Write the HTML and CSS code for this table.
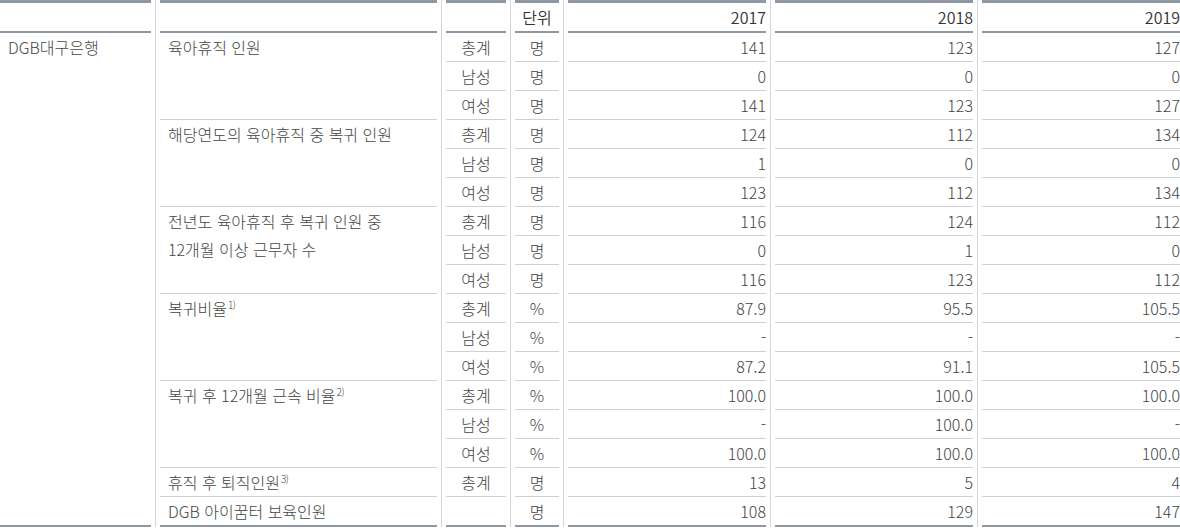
FILE: index.html
```html
<!DOCTYPE html>
<html lang="ko">
<head>
<meta charset="utf-8">
<title>육아휴직 현황</title>
<link rel="stylesheet" href="styles.css">
</head>
<body>
<div class="table">
  <!-- header -->
  <div class="c c1 hd"><div class="in"></div></div>
  <div class="c c2 hd"><div class="in"></div></div>
  <div class="c c3 hd"><div class="in"></div></div>
  <div class="c c4 hd"><div class="in">단위</div></div>
  <div class="c c5 hd"><div class="in">2017</div></div>
  <div class="c c6 hd"><div class="in">2018</div></div>
  <div class="c c7 hd"><div class="in">2019</div></div>

  <div class="c c1 span17"><div class="in last">DGB대구은행</div></div>

  <div class="c c2 span3"><div class="in">육아휴직 인원</div></div>
  <div class="c c3"><div class="in">총계</div></div><div class="c c4"><div class="in">명</div></div>
  <div class="c c5"><div class="in">141</div></div><div class="c c6"><div class="in">123</div></div><div class="c c7"><div class="in">127</div></div>
  <div class="c c3"><div class="in">남성</div></div><div class="c c4"><div class="in">명</div></div>
  <div class="c c5"><div class="in">0</div></div><div class="c c6"><div class="in">0</div></div><div class="c c7"><div class="in">0</div></div>
  <div class="c c3"><div class="in">여성</div></div><div class="c c4"><div class="in">명</div></div>
  <div class="c c5"><div class="in">141</div></div><div class="c c6"><div class="in">123</div></div><div class="c c7"><div class="in">127</div></div>

  <div class="c c2 span3"><div class="in">해당연도의 육아휴직 중 복귀 인원</div></div>
  <div class="c c3"><div class="in">총계</div></div><div class="c c4"><div class="in">명</div></div>
  <div class="c c5"><div class="in">124</div></div><div class="c c6"><div class="in">112</div></div><div class="c c7"><div class="in">134</div></div>
  <div class="c c3"><div class="in">남성</div></div><div class="c c4"><div class="in">명</div></div>
  <div class="c c5"><div class="in">1</div></div><div class="c c6"><div class="in">0</div></div><div class="c c7"><div class="in">0</div></div>
  <div class="c c3"><div class="in">여성</div></div><div class="c c4"><div class="in">명</div></div>
  <div class="c c5"><div class="in">123</div></div><div class="c c6"><div class="in">112</div></div><div class="c c7"><div class="in">134</div></div>

  <div class="c c2 span3"><div class="in">전년도 육아휴직 후 복귀 인원 중<br>12개월 이상 근무자 수</div></div>
  <div class="c c3"><div class="in">총계</div></div><div class="c c4"><div class="in">명</div></div>
  <div class="c c5"><div class="in">116</div></div><div class="c c6"><div class="in">124</div></div><div class="c c7"><div class="in">112</div></div>
  <div class="c c3"><div class="in">남성</div></div><div class="c c4"><div class="in">명</div></div>
  <div class="c c5"><div class="in">0</div></div><div class="c c6"><div class="in">1</div></div><div class="c c7"><div class="in">0</div></div>
  <div class="c c3"><div class="in">여성</div></div><div class="c c4"><div class="in">명</div></div>
  <div class="c c5"><div class="in">116</div></div><div class="c c6"><div class="in">123</div></div><div class="c c7"><div class="in">112</div></div>

  <div class="c c2 span3"><div class="in">복귀비율<sup>1)</sup></div></div>
  <div class="c c3"><div class="in">총계</div></div><div class="c c4"><div class="in">%</div></div>
  <div class="c c5"><div class="in">87.9</div></div><div class="c c6"><div class="in">95.5</div></div><div class="c c7"><div class="in">105.5</div></div>
  <div class="c c3"><div class="in">남성</div></div><div class="c c4"><div class="in">%</div></div>
  <div class="c c5"><div class="in">-</div></div><div class="c c6"><div class="in">-</div></div><div class="c c7"><div class="in">-</div></div>
  <div class="c c3"><div class="in">여성</div></div><div class="c c4"><div class="in">%</div></div>
  <div class="c c5"><div class="in">87.2</div></div><div class="c c6"><div class="in">91.1</div></div><div class="c c7"><div class="in">105.5</div></div>

  <div class="c c2 span3"><div class="in">복귀 후 12개월 근속 비율<sup>2)</sup></div></div>
  <div class="c c3"><div class="in">총계</div></div><div class="c c4"><div class="in">%</div></div>
  <div class="c c5"><div class="in">100.0</div></div><div class="c c6"><div class="in">100.0</div></div><div class="c c7"><div class="in">100.0</div></div>
  <div class="c c3"><div class="in">남성</div></div><div class="c c4"><div class="in">%</div></div>
  <div class="c c5"><div class="in">-</div></div><div class="c c6"><div class="in">100.0</div></div><div class="c c7"><div class="in">-</div></div>
  <div class="c c3"><div class="in">여성</div></div><div class="c c4"><div class="in">%</div></div>
  <div class="c c5"><div class="in">100.0</div></div><div class="c c6"><div class="in">100.0</div></div><div class="c c7"><div class="in">100.0</div></div>

  <div class="c c2"><div class="in">휴직 후 퇴직인원<sup>3)</sup></div></div>
  <div class="c c3"><div class="in">총계</div></div><div class="c c4"><div class="in">명</div></div>
  <div class="c c5"><div class="in">13</div></div><div class="c c6"><div class="in">5</div></div><div class="c c7"><div class="in">4</div></div>

  <div class="c c2"><div class="in last">DGB 아이꿈터 보육인원</div></div>
  <div class="c c3"><div class="in last"></div></div><div class="c c4"><div class="in last">명</div></div>
  <div class="c c5"><div class="in last">108</div></div><div class="c c6"><div class="in last">129</div></div><div class="c c7"><div class="in last">147</div></div>
</div>
</body>
</html>
```
FILE: styles.css
```css
html, body {
  margin: 0;
  padding: 0;
  background: #fff;
}
body {
  font-family: "Noto Sans CJK KR", "Noto Sans", sans-serif;
  font-size: 16px;
  font-weight: 300;
  color: #444;
  letter-spacing: 0;
}
.table {
  display: grid;
  grid-template-columns: 156px 286px 69px 53px 207px 207px 202px;
  width: 1180px;
}
.c {
  display: flex;
  flex-direction: column;
  padding: 0 4px;
  border-right: 1px solid #d3d6da;
}
.c1 { grid-column: 1; padding-left: 0; }
.c2 { grid-column: 2; }
.c3 { grid-column: 3; }
.c4 { grid-column: 4; }
.c5 { grid-column: 5; }
.c6 { grid-column: 6; }
.c7 { grid-column: 7; border-right: none; padding-right: 0; }
.span17 { grid-row: span 17; }
.span3 { grid-row: span 3; }
.in {
  flex: 1;
  height: 28px;
  line-height: 28px;
  white-space: nowrap;
  border-bottom: 1px solid #cdd1d6;
}
.span3 .in, .span17 .in { height: auto; }
.c1 .in, .c2 .in { padding-left: 8px; text-align: left; }
.c3 .in, .c4 .in { text-align: center; }
.c5 .in, .c6 .in, .c7 .in { text-align: right; }
.c1.span17 .in { border-bottom: 2px solid #8e98a4; }
.in.last { border-bottom: 2px solid #8e98a4; }
.hd .in {
  border-top: 3px solid #8e98a4;
  border-bottom: 2px solid #8e98a4;
  color: #333;
  font-weight: 350;
}
sup {
  font-size: 10px;
  line-height: 0;
  vertical-align: 6px;
  letter-spacing: -0.5px;
  margin-left: 1px;
}
```
